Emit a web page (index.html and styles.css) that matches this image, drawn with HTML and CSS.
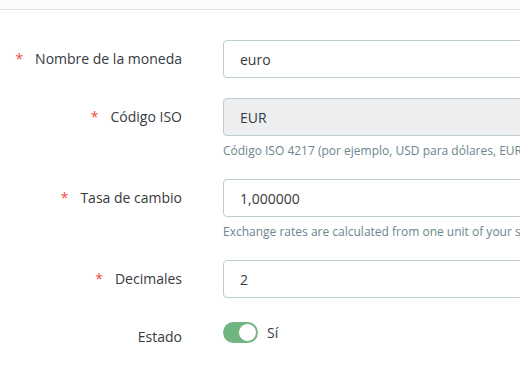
FILE: index.html
```html
<!DOCTYPE html>
<html lang="es">
<head>
    <meta charset="UTF-8">
    <title>Moneda</title>
    <link rel="stylesheet" href="styles.css">
</head>
<body>
    <div class="topbar"></div>
    <form class="form">
        <div class="row">
            <label class="label"><span class="req">*</span>Nombre de la moneda</label>
            <div class="field">
                <input class="input" type="text" value="euro">
            </div>
        </div>
        <div class="row">
            <label class="label"><span class="req">*</span>Código ISO</label>
            <div class="field">
                <input class="input" type="text" value="EUR" disabled>
                <small class="help">Código ISO 4217 (por ejemplo, USD para dólares, EUR para euros, etc.).</small>
            </div>
        </div>
        <div class="row">
            <label class="label"><span class="req">*</span>Tasa de cambio</label>
            <div class="field">
                <input class="input" type="text" value="1,000000">
                <small class="help">Exchange rates are calculated from one unit of your shop's default currency.</small>
            </div>
        </div>
        <div class="row">
            <label class="label"><span class="req">*</span>Decimales</label>
            <div class="field">
                <input class="input" type="text" value="2">
            </div>
        </div>
        <div class="row row-switch">
            <label class="label">Estado</label>
            <div class="field switch-field">
                <span class="switch"><span class="knob"></span></span>
                <span class="switch-text">Sí</span>
            </div>
        </div>
    </form>
</body>
</html>
```

FILE: styles.css
```css
body{
    margin: 0;
    background-color: #fff;
    font-family: "Open Sans", "Liberation Sans", sans-serif;
    font-size: 14px;
    color: #363a41;
    overflow: hidden;
}
.topbar{
    height: 9px;
    background-color: #fafbfc;
    border-bottom: 1px solid #dfe3e6;
}
.form{
    padding-top: 30px;
}
.row{
    display: grid;
    grid-template-columns: 182px 480px;
    column-gap: 41px;
    align-items: start;
    margin-bottom: 20px;
}
.label{
    text-align: right;
    line-height: 38px;
    white-space: nowrap;
}
.req{
    color: #f54c3e;
    margin-right: 12px;
}
.field{
    display: flex;
    flex-direction: column;
}
.input{
    box-sizing: border-box;
    height: 38px;
    width: 100%;
    padding: 0 16px;
    border: 1px solid #bbcdd2;
    border-radius: 4px;
    font-family: inherit;
    font-size: 14px;
    color: #363a41;
    background-color: #fff;
}
.input:disabled{
    background-color: #eceeef;
    border-color: #bbcdd2;
    color: #363a41;
}
.help{
    margin-top: 6px;
    font-size: 12px;
    line-height: 17px;
    color: #6c868e;
    white-space: nowrap;
}
.row-switch{
    align-items: center;
}
.row-switch .label{
    line-height: 20px;
    padding-top: 9px;
}
.switch-field{
    flex-direction: row;
    align-items: center;
}
.switch{
    position: relative;
    box-sizing: border-box;
    width: 35px;
    height: 21px;
    border-radius: 11px;
    background-color: #70b580;
}
.knob{
    position: absolute;
    top: 1px;
    right: 1px;
    width: 19px;
    height: 19px;
    box-sizing: border-box;
    border-radius: 50%;
    border: 1px solid #70b580;
    background-color: #fff;
}
.switch-text{
    margin-left: 9px;
}
```
